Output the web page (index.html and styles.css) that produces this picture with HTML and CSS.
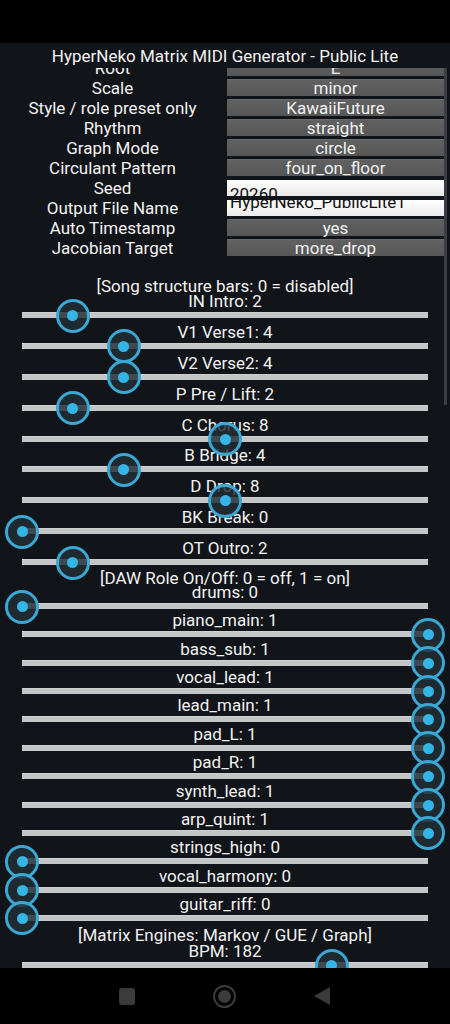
FILE: index.html
```html
<!DOCTYPE html>
<html>
<head>
<meta charset="utf-8">
<link rel="stylesheet" href="styles.css">
</head>
<body>
<div class="status"></div>
<div class="app">
  <div class="title">HyperNeko Matrix MIDI Generator - Public Lite</div>
  <div class="scroll">
    <div class="content">
      <div class="form">
        <div class="lbl">Root</div><div class="btn">E</div>
        <div class="lbl">Scale</div><div class="btn">minor</div>
        <div class="lbl">Style / role preset only</div><div class="btn">KawaiiFuture</div>
        <div class="lbl">Rhythm</div><div class="btn">straight</div>
        <div class="lbl">Graph Mode</div><div class="btn">circle</div>
        <div class="lbl">Circulant Pattern</div><div class="btn">four_on_floor</div>
        <div class="lbl">Seed</div><div class="input seed"><span>20260</span></div>
        <div class="lbl">Output File Name</div><div class="input outname"><span>HyperNeko_PublicLite1</span></div>
        <div class="lbl">Auto Timestamp</div><div class="btn">yes</div>
        <div class="lbl">Jacobian Target</div><div class="btn">more_drop</div>
      </div>

      <div class="hdr hdr-song">[Song structure bars: 0 = disabled]</div>
      <div class="srow song"><div class="slabel">IN Intro: 2</div><div class="sl"><div class="track"><span class="thumb" style="left:12.5%"></span></div></div></div>
      <div class="srow song"><div class="slabel">V1 Verse1: 4</div><div class="sl"><div class="track"><span class="thumb" style="left:25%"></span></div></div></div>
      <div class="srow song"><div class="slabel">V2 Verse2: 4</div><div class="sl"><div class="track"><span class="thumb" style="left:25%"></span></div></div></div>
      <div class="srow song"><div class="slabel">P Pre / Lift: 2</div><div class="sl"><div class="track"><span class="thumb" style="left:12.5%"></span></div></div></div>
      <div class="srow song"><div class="slabel">C Chorus: 8</div><div class="sl"><div class="track"><span class="thumb" style="left:50%"></span></div></div></div>
      <div class="srow song"><div class="slabel">B Bridge: 4</div><div class="sl"><div class="track"><span class="thumb" style="left:25%"></span></div></div></div>
      <div class="srow song"><div class="slabel">D Drop: 8</div><div class="sl"><div class="track"><span class="thumb" style="left:50%"></span></div></div></div>
      <div class="srow song"><div class="slabel">BK Break: 0</div><div class="sl"><div class="track"><span class="thumb" style="left:0%"></span></div></div></div>
      <div class="srow song"><div class="slabel">OT Outro: 2</div><div class="sl"><div class="track"><span class="thumb" style="left:12.5%"></span></div></div></div>

      <div class="hdr hdr-daw">[DAW Role On/Off: 0 = off, 1 = on]</div>
      <div class="srow daw"><div class="slabel">drums: 0</div><div class="sl"><div class="track"><span class="thumb" style="left:0%"></span></div></div></div>
      <div class="srow daw"><div class="slabel">piano_main: 1</div><div class="sl"><div class="track"><span class="thumb" style="left:100%"></span></div></div></div>
      <div class="srow daw"><div class="slabel">bass_sub: 1</div><div class="sl"><div class="track"><span class="thumb" style="left:100%"></span></div></div></div>
      <div class="srow daw"><div class="slabel">vocal_lead: 1</div><div class="sl"><div class="track"><span class="thumb" style="left:100%"></span></div></div></div>
      <div class="srow daw"><div class="slabel">lead_main: 1</div><div class="sl"><div class="track"><span class="thumb" style="left:100%"></span></div></div></div>
      <div class="srow daw"><div class="slabel">pad_L: 1</div><div class="sl"><div class="track"><span class="thumb" style="left:100%"></span></div></div></div>
      <div class="srow daw"><div class="slabel">pad_R: 1</div><div class="sl"><div class="track"><span class="thumb" style="left:100%"></span></div></div></div>
      <div class="srow daw"><div class="slabel">synth_lead: 1</div><div class="sl"><div class="track"><span class="thumb" style="left:100%"></span></div></div></div>
      <div class="srow daw"><div class="slabel">arp_quint: 1</div><div class="sl"><div class="track"><span class="thumb" style="left:100%"></span></div></div></div>
      <div class="srow daw"><div class="slabel">strings_high: 0</div><div class="sl"><div class="track"><span class="thumb" style="left:0%"></span></div></div></div>
      <div class="srow daw"><div class="slabel">vocal_harmony: 0</div><div class="sl"><div class="track"><span class="thumb" style="left:0%"></span></div></div></div>
      <div class="srow daw"><div class="slabel">guitar_riff: 0</div><div class="sl"><div class="track"><span class="thumb" style="left:0%"></span></div></div></div>

      <div class="hdr hdr-matrix">[Matrix Engines: Markov / GUE / Graph]</div>
      <div class="srow daw"><div class="slabel">BPM: 182</div><div class="sl"><div class="track"><span class="thumb" style="left:76.25%"></span></div></div></div>
    </div>
    <div class="scrollbar"></div>
  </div>
</div>
<div class="nav">
  <svg class="nav-ico" width="16" height="17" viewBox="0 0 16 17"><rect x="0" y="0" width="16" height="17" rx="3" fill="#3b3b3b"/></svg>
  <svg class="nav-ico" width="23" height="23" viewBox="0 0 23 23"><circle cx="11.5" cy="11.5" r="10.5" fill="none" stroke="#3b3b3b" stroke-width="2"/><circle cx="11.5" cy="11.5" r="6.5" fill="#3b3b3b"/></svg>
  <svg class="nav-ico" width="16" height="18" viewBox="0 0 16 18"><polygon points="16,0 16,18 0,9" fill="#3b3b3b"/></svg>
</div>
</body>
</html>
```

FILE: styles.css
```css
* { box-sizing: border-box; }
html, body {
  margin: 0;
  padding: 0;
  background: #000;
}
body {
  width: 450px;
  height: 1024px;
  overflow: hidden;
  font-family: Roboto, "Liberation Sans", sans-serif;
  font-size: 17px;
  color: #f2f2f2;
}
.status {
  height: 43px;
  background: #000;
}
.app {
  height: 925px;
  background: #111418;
  display: flex;
  flex-direction: column;
}
.title {
  height: 25px;
  line-height: 26px;
  text-align: center;
  white-space: nowrap;
}
.scroll {
  position: relative;
  height: 900px;
  overflow: hidden;
}
.content {
  margin-top: -10px;
}
.form {
  display: grid;
  grid-template-columns: 225px 217px;
  column-gap: 2px;
  grid-auto-rows: 20px;
}
.lbl {
  line-height: 20px;
  text-align: center;
  white-space: nowrap;
}
.btn {
  margin-top: 1px;
  height: 17px;
  line-height: 17px;
  text-align: center;
  background: linear-gradient(#616161, #565656);
  border-top: 1px solid #6a6a6a;
  color: #f0f0f0;
}
.input {
  margin-top: 2px;
  height: 16px;
  overflow: hidden;
  background: linear-gradient(#ffffff, #e9e9e9);
  color: #111;
  padding-left: 3px;
}
.input span {
  display: block;
  line-height: 16px;
  white-space: nowrap;
}
.seed span { padding-top: 6px; }
.outname span { margin-top: -6px; }

.hdr {
  text-align: center;
  white-space: nowrap;
}
.hdr-song {
  height: 33px;
  padding-top: 18px;
  line-height: 20px;
}
.hdr-daw {
  height: 13px;
  line-height: 18px;
}
.hdr-matrix {
  height: 19px;
  padding-top: 3px;
  line-height: 20px;
}
.srow.song { height: 30.9px; }
.srow.daw { height: 28.36px; }
.slabel {
  height: 20px;
  line-height: 20px;
  text-align: center;
  white-space: nowrap;
}
.sl {
  padding: 1px 22px 0 22px;
}
.track {
  position: relative;
  height: 6px;
  background: #c3c5c7;
  border-top: 1px solid #cdcfd1;
}
.thumb {
  position: absolute;
  top: 50%;
  width: 34px;
  height: 34px;
  margin-left: -17px;
  margin-top: -17px;
  border-radius: 50%;
  border: 3.5px solid #3aa8d4;
  background: rgba(34, 46, 54, 0.82);
}
.thumb::after {
  content: "";
  position: absolute;
  left: 50%;
  top: 50%;
  width: 11px;
  height: 11px;
  margin-left: -5.5px;
  margin-top: -5.5px;
  border-radius: 50%;
  background: #33b5e5;
}
.scrollbar {
  position: absolute;
  left: 444px;
  top: 0;
  width: 3px;
  height: 337px;
  background: #3a3d42;
}
.nav {
  height: 56px;
  background: #000;
  display: flex;
  align-items: center;
  padding-left: 119px;
  gap: 78px;
}
.nav-ico { display: block; }
```
